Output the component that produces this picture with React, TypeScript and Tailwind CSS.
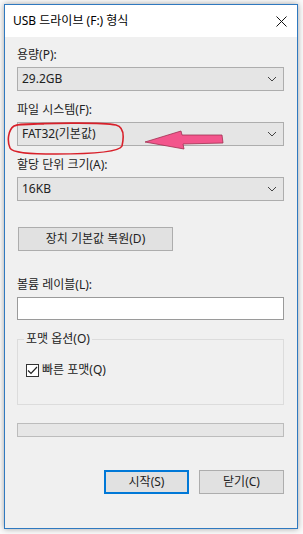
import React from 'react'

const font = { fontFamily: '"Noto Sans", "Noto Sans CJK KR", sans-serif' }

function Chevron() {
  return (
    <svg width="10" height="6" viewBox="0 0 10 6" className="shrink-0">
      <path d="M1 1 L5 5 L9 1" fill="none" stroke="#444" strokeWidth="1" />
    </svg>
  )
}

function Combo({ value }: { value: string }) {
  return (
    <div className="h-[24px] w-[267px] flex items-center justify-between pl-[4px] pr-[6px] bg-[#e5e5e5] border border-[#adadad] text-[12px] text-[#222]">
      <span>{value}</span>
      <Chevron />
    </div>
  )
}

function Label({ children, className = '' }: { children: React.ReactNode; className?: string }) {
  return <div className={`h-[16px] leading-[16px] text-[12px] text-[#222] ${className}`}>{children}</div>
}

export default function App() {
  return (
    <div className="w-[303px] h-[534px] bg-[#fafafa] pt-[4px] pl-[4px] overflow-hidden" style={font}>
      <div className="relative w-[294px] h-[525px] border border-[#2f79c0] bg-[#f0f0f0] shadow-[0_0_6px_rgba(0,0,0,0.35)] flex flex-col">
        {/* title bar */}
        <div className="h-[32px] bg-white flex items-center justify-between pl-[8px] pr-[10px] shrink-0">
          <span className="text-[12px] text-black">USB 드라이브 (F:) 형식</span>
          <svg width="11" height="11" viewBox="0 0 11 11">
            <path d="M0.5 0.5 L10.5 10.5 M10.5 0.5 L0.5 10.5" stroke="#111" strokeWidth="1" />
          </svg>
        </div>

        <div className="flex flex-col pl-[12px] pt-[10px]">
          <Label>용량(P):</Label>
          <div className="mt-[4px]">
            <Combo value="29.2GB" />
          </div>

          <Label className="mt-[11px]">파일 시스템(F):</Label>
          <div className="mt-[4px]">
            <Combo value="FAT32(기본값)" />
          </div>

          <Label className="mt-[11px]">할당 단위 크기(A):</Label>
          <div className="mt-[4px]">
            <Combo value="16KB" />
          </div>

          <button className="mt-[26px] ml-[1px] h-[24px] w-[155px] bg-[#e1e1e1] border border-[#adadad] text-[12px] text-[#222]">
            장치 기본값 복원(D)
          </button>

          <Label className="mt-[26px]">볼륨 레이블(L):</Label>
          <div className="mt-[4px] h-[23px] w-[267px] bg-white border border-[#9a9a9a]" />

          <div className="relative mt-[19px] w-[267px] h-[66px] border border-[#dcdcdc]">
            <span className="absolute left-[6px] top-[-9px] px-[2px] bg-[#f0f0f0] text-[12px] leading-[16px] text-[#222]">
              포맷 옵션(O)
            </span>
            <div className="flex items-center gap-[3px] mt-[21px] ml-[8px]">
              <div className="w-[13px] h-[13px] bg-white border border-[#333] flex items-center justify-center">
                <svg width="11" height="9" viewBox="0 0 11 9">
                  <path d="M1 4.5 L4 7.5 L10 1" fill="none" stroke="#222" strokeWidth="1.2" />
                </svg>
              </div>
              <span className="text-[12px] text-[#222]">빠른 포맷(Q)</span>
            </div>
          </div>

          <div className="mt-[18px] w-[267px] h-[14px] bg-[#e6e6e6] border border-[#bcbcbc]" />

          <div className="mt-[33px] flex gap-[10px] ml-[87px]">
            <button className="h-[24px] w-[85px] bg-[#e1e1e1] border-2 border-[#0078d7] text-[12px] text-[#222]">
              시작(S)
            </button>
            <button className="h-[24px] w-[85px] bg-[#e1e1e1] border border-[#adadad] text-[12px] text-[#222]">
              닫기(C)
            </button>
          </div>
        </div>

        {/* red annotation circle */}
        <svg className="absolute left-[1px] top-[117px]" width="120" height="34" viewBox="0 0 120 34">
          <path
            d="M10 3 C40 1 95 0 110 3 C118 5 118 15 116 24 C113 31 80 32 50 32 C25 32 6 31 4 26 C1 19 2 8 8 4 C14 1 30 2 38 2"
            fill="none"
            stroke="#d8202a"
            strokeWidth="1.6"
          />
        </svg>

        {/* pink arrow */}
        <svg className="absolute left-[139px] top-[121px]" width="82" height="26" viewBox="0 0 82 26">
          <path
            d="M1 16 L37 5 L38 9 L78 9 L79 17 L39 18 L40 23 Z"
            fill="#f3558c"
            stroke="#a03050"
            strokeWidth="0.8"
            strokeLinejoin="round"
          />
        </svg>
      </div>
    </div>
  )
}
